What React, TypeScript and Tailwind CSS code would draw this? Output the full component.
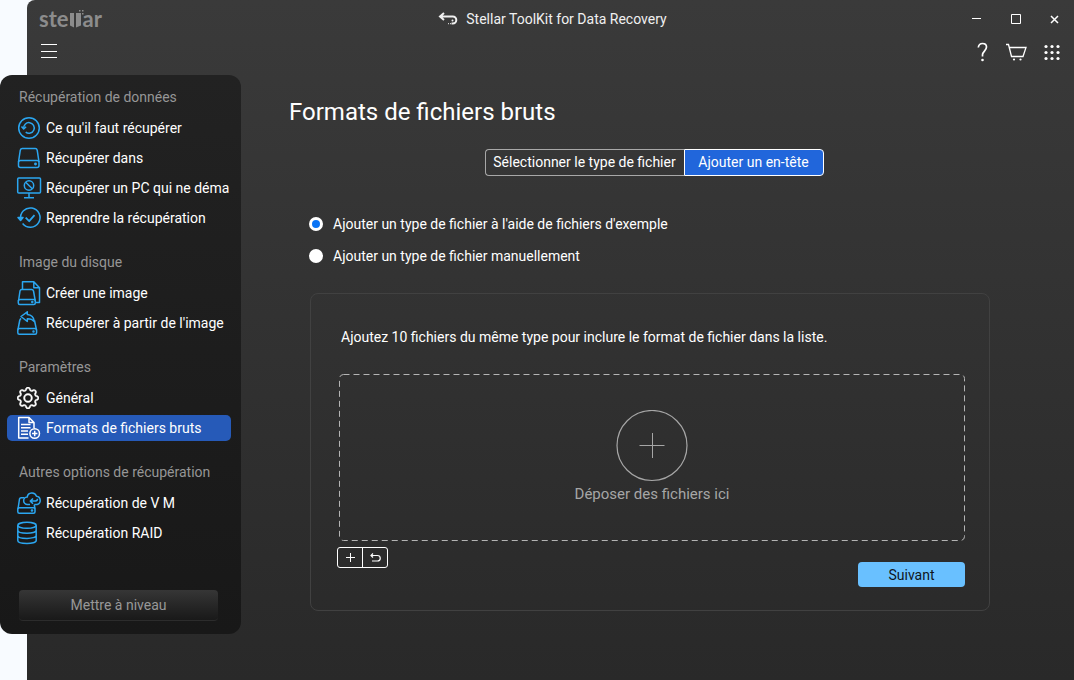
import { useState } from "react";
import type { ReactNode } from "react";
import { BsGear } from "react-icons/bs";

function Icon({ children }: { children: ReactNode }) {
  return (
    <svg viewBox="0 0 24 24" className="size-6 shrink-0 overflow-visible" fill="none" stroke="currentColor" strokeWidth="1.5" strokeLinejoin="round" aria-hidden="true">
      {children}
    </svg>
  );
}

const icons: Record<string, ReactNode> = {
  recover: (
    <Icon>
      <circle cx="12" cy="12" r="10.3" />
      <path d="M6.7 12.6a5.3 5.3 0 1 1 2 3.5" />
      <path d="M4.5 10.6l2.2 2.4 2.4-2.2" />
    </Icon>
  ),
  drive: (
    <Icon>
      <path d="M1.5 16L3.300 4.200Q3.700 2.600 5.300 2.600h13Q19.800 2.600 20.200 4.200L22 16" />
      <rect x="1.5" y="14.5" width="20.5" height="7" rx="2" />
      <circle cx="18.5" cy="18" r=".7" fill="currentColor" />
    </Icon>
  ),
  pc: (
    <Icon>
      <rect x=".7" y="2" width="22.8" height="15" rx="1" />
      <path d="M12 17v4.700M7 21.800h10" />
      <circle cx="12" cy="9.500" r="4.700" />
      <path d="M8.700 6.200l6.600 6.600" />
    </Icon>
  ),
  resume: (
    <Icon>
      <path d="M3.800 13.500a9.700 9.700 0 1 1 1.800 4" />
      <path d="M1 11.500h5L3.600 14.500z" fill="currentColor" />
      <path d="M8.700 11.700l3.500 3.500 5.300-6" strokeWidth="1.800" />
    </Icon>
  ),
  image: (
    <Icon>
      <path d="M5.500 8.500V.8h11.300l5.700 6V21.500H18.500M16.800.8v6h5.700" />
      <path d="M1.500 20L3 10q.4-1.400 1.800-1.400h9.900q1.400 0 1.800 1.400L18.300 20" />
      <rect x="1.300" y="18.500" width="17" height="5" rx="1.500" />
      <circle cx="15.300" cy="21" r=".5" fill="currentColor" />
    </Icon>
  ),
  restore: (
    <Icon>
      <path d="M4 5.500L10.300.8v2.700c4.200.3 6.500 2.300 7 7-2-2.200-4-2.800-7-2.700v2.700z" />
      <path d="M.9 19L2.700 9.500q.3-1.500 1.500-2M17.500 9.500L19.500 19" />
      <rect x=".8" y="17.500" width="18.800" height="5.800" rx="1.500" />
      <circle cx="16.500" cy="20.500" r=".5" fill="currentColor" />
    </Icon>
  ),
  gear: (
    <span className="flex size-6 shrink-0 items-center">
      <BsGear size={22} stroke="currentColor" strokeWidth=".35" aria-hidden="true" />
    </span>
  ),
  formats: (
    <Icon>
      <path d="M11.500 22H1.700V1.500h10.300l5 5v5.500M12 1.500v5h5" />
      <path d="M4 8.500h9.500M4 11.700h9.500M4 15h7M4 18.300h7" />
      <circle cx="17.700" cy="17.500" r="4.800" />
      <path d="M17.700 14.800v5.400M15 17.500h5.400" />
    </Icon>
  ),
  vm: (
    <Icon>
      <path d="M1 18L2.500 8q.3-1.300 1.600-1.300h3.400M17.200 13.500L18 18" />
      <rect x=".8" y="16.700" width="17.200" height="5.600" rx="1.500" />
      <circle cx="15" cy="19.500" r=".6" fill="currentColor" />
      <path d="M13 13.500h-2.500a3.700 3.700 0 0 1-.3-7.400 4.800 4.800 0 0 1 9.300-.8 4.200 4.200 0 0 1 .7 8.200H17.500" />
      <path d="M16 7.500l-2.700 2.600 2.700 2.600M13.500 10.100h5q2-.2 2-2.300" />
    </Icon>
  ),
  raid: (
    <Icon>
      <ellipse cx="10" cy="4.300" rx="9.200" ry="3" />
      <path d="M.8 4.300v15.200c0 4 18.400 4 18.400 0V4.300M.8 9.300c0 4 18.400 4 18.400 0M.8 14.400c0 4 18.400 4 18.400 0" />
    </Icon>
  ),
};

const menu = [
  {
    title: "Récupération de données",
    items: [
      { icon: "recover", label: "Ce qu'il faut récupérer" },
      { icon: "drive", label: "Récupérer dans" },
      { icon: "pc", label: "Récupérer un PC qui ne déma" },
      { icon: "resume", label: "Reprendre la récupération" },
    ],
  },
  {
    title: "Image du disque",
    items: [
      { icon: "image", label: "Créer une image" },
      { icon: "restore", label: "Récupérer à partir de l'image" },
    ],
  },
  {
    title: "Paramètres",
    items: [
      { icon: "gear", label: "Général", white: true },
      { icon: "formats", label: "Formats de fichiers bruts", white: true },
    ],
  },
  {
    title: "Autres options de récupération",
    items: [
      { icon: "vm", label: "Récupération de V M" },
      { icon: "raid", label: "Récupération RAID" },
    ],
  },
];

function Logo() {
  return (
    <div className="flex items-center pl-2 font-['Lato'] text-[22px] leading-6 font-bold text-[#8c8c8c]">
      <span>ste</span>
      <svg width="14" height="24" viewBox="0 0 14 24" className="overflow-visible" fill="currentColor" aria-label="ll">
        <path d="M1 6h4v14.500L1 18.500zM7 6h5V18.500l-5 2z" />
        <path d="M10 3h1.500v1.500H10zM13 3h1.500v1.500H13zM13 6h1.500v1.500H13z" />
      </svg>
      <span>ar</span>
    </div>
  );
}

function Header() {
  return (
    <header className="text-white">
      <div className="grid h-[38px] grid-cols-[1fr_auto_1fr] items-center pl-1">
        <Logo />
        <div className="flex items-center gap-2 text-sm text-[#f0f0f0]">
          <svg width="20" height="14" viewBox="0 0 20 14" fill="none" stroke="currentColor" strokeWidth="2" aria-hidden="true">
            <path d="M6 1L2 4.500 6 8M2.500 4.500h12.300a3.500 3.500 0 0 1 0 7H13.500" />
            <circle cx="14.500" cy="8.500" r="1" fill="currentColor" stroke="none" />
            <path d="M10 11.700h3" strokeWidth="1" strokeDasharray="1 1" />
          </svg>
          <span>Stellar ToolKit for Data Recovery</span>
        </div>
        <div className="flex justify-end">
          <button aria-label="Réduire" className="flex h-[38px] w-[39px] items-center justify-center">
            <svg width="10" height="10" stroke="currentColor"><path d="M0 4.500h9" /></svg>
          </button>
          <button aria-label="Agrandir" className="flex h-[38px] w-[39px] items-center justify-center">
            <svg width="10" height="10" fill="none" stroke="currentColor"><path d="M.5.500h9v9h-9z" /></svg>
          </button>
          <button aria-label="Fermer" className="flex h-[38px] w-[39px] items-center justify-center">
            <svg width="9" height="9" stroke="currentColor" strokeWidth="1.500"><path d="M1 1l7 7M8 1l-7 7" /></svg>
          </button>
        </div>
      </div>
      <div className="flex h-[37px] items-start justify-between pr-[13px] pl-3.5">
        <button aria-label="Menu" className="mt-1.5">
          <svg width="16" height="15" stroke="currentColor"><path d="M0 .5h16M0 7.500h16M0 13.500h16" /></svg>
        </button>
        <div className="mt-1 flex items-center gap-4">
          <button aria-label="Aide">
            <svg width="14" height="22" viewBox="0 0 14 22" fill="none" stroke="currentColor" strokeWidth="1.700">
              <path d="M3.300 5.500C3.700 2.500 5.500 1.500 7.500 1.500c2.300 0 4 1.400 4 3.600 0 3.600-4 4.300-4 7.700v1.700" />
              <circle cx="7.500" cy="18" r="1.300" fill="currentColor" stroke="none" />
            </svg>
          </button>
          <button aria-label="Panier">
            <svg width="22" height="20" viewBox="0 0 22 20" fill="none" stroke="currentColor" strokeWidth="1.300">
              <path d="M1 1.500h2.500L6.500 13.500H18L21 4.500H4.500" />
              <circle cx="9" cy="16.500" r="1.100" fill="currentColor" stroke="none" />
              <circle cx="15.500" cy="16.500" r="1.100" fill="currentColor" stroke="none" />
            </svg>
          </button>
          <button aria-label="Applications">
            <svg width="18" height="18" viewBox="0 0 18 18" fill="currentColor">
              {[2.5, 8.5, 14.5].map((y) => [3, 9, 15].map((x) => <circle key={`${x}-${y}`} cx={x} cy={y} r="1.600" />))}
            </svg>
          </button>
        </div>
      </div>
    </header>
  );
}

function Sidebar({ active, onSelect }: { active: string; onSelect: (label: string) => void }) {
  return (
    <aside className="-ml-[27px] w-[241px] shrink-0 self-start rounded-xl bg-linear-to-b from-[#222222] to-[#181818] pt-3 pr-2.5 pb-[13px] pl-[7px]">
      <nav className="flex flex-col gap-[21px]">
        {menu.map((group) => (
          <div key={group.title}>
            <h2 className="mb-2 pl-3 text-sm text-[#969696]">{group.title}</h2>
            <div className="flex flex-col gap-1">
              {group.items.map((item) => (
                <button
                  key={item.label}
                  onClick={() => onSelect(item.label)}
                  className={`flex h-[26px] items-center gap-[5px] rounded-[5px] pl-2.5 text-left text-sm whitespace-nowrap text-white ${active === item.label ? "bg-[#265ab8]" : ""}`}
                >
                  <span className={"white" in item ? "text-white" : "text-[#2ba6f0]"}>{icons[item.icon]}</span>
                  {item.label}
                </button>
              ))}
            </div>
          </div>
        ))}
      </nav>
      <button className="mt-11 mr-[13px] ml-3 flex h-[31px] w-[199px] items-center justify-center rounded border-b border-[#2c2c2c] bg-linear-to-b from-[#363636] to-[#191919] text-sm text-[#989898]">
        Mettre à niveau
      </button>
    </aside>
  );
}

export default function App() {
  const [active, setActive] = useState("Formats de fichiers bruts");
  const [tab, setTab] = useState("header");
  const [mode, setMode] = useState("sample");

  return (
    <div className="min-h-screen bg-[#f8fbff] pl-[27px] font-['Roboto',sans-serif]">
      <div className="flex min-h-screen flex-col rounded-tl-lg bg-linear-to-b from-[#3a3a3a] to-[#292929]">
        <Header />
        <div className="flex flex-1">
          <Sidebar active={active} onSelect={setActive} />
          <main className="flex-1 pt-[21px] pr-[84px] pl-12 text-sm text-white">
            <h1 className="text-2xl">Formats de fichiers bruts</h1>

            <div className="mt-[21px] ml-[21px] flex justify-center pl-2">
              <button
                onClick={() => setTab("type")}
                className={`h-[27px] w-[199px] rounded-l border border-r-0 border-[#a8a8a8] pb-0.5 ${tab === "type" ? "bg-[#2166db]" : ""}`}
              >
                Sélectionner le type de fichier
              </button>
              <button
                onClick={() => setTab("header")}
                className={`h-[27px] w-[140px] rounded-r border border-white pb-0.5 ${tab === "header" ? "bg-[#2166db]" : ""}`}
              >
                Ajouter un en-tête
              </button>
            </div>

            <div className="mt-[38px] ml-5 flex flex-col gap-3">
              <label className="flex items-center gap-2.5">
                <input type="radio" name="mode" checked={mode === "sample"} onChange={() => setMode("sample")}
                  className="size-3.5 appearance-none rounded-full border-3 border-white bg-white checked:bg-[#0a74f5]" />
                Ajouter un type de fichier à l'aide de fichiers d'exemple
              </label>
              <label className="flex items-center gap-2.5">
                <input type="radio" name="mode" checked={mode === "manual"} onChange={() => setMode("manual")}
                  className="size-3.5 appearance-none rounded-full border-3 border-white bg-white checked:bg-[#0a74f5]" />
                Ajouter un type de fichier manuellement
              </label>
            </div>

            <section className="mt-[27px] ml-[21px] rounded-lg border border-[#414141] pt-[33px] pr-6 pb-[23px] pl-7">
              <p className="pl-0.5">Ajoutez 10 fichiers du même type pour inclure le format de fichier dans la liste.</p>

              <div className="relative mt-[27px] flex h-[167px] flex-col items-center pt-9">
                <svg className="absolute inset-0 size-full" fill="none" stroke="#b4b4b4" strokeDasharray="6 4" aria-hidden="true">
                  <rect x=".5" y=".5" rx="4" className="h-[calc(100%-1px)] w-[calc(100%-1px)]" />
                </svg>
                <svg width="72" height="72" fill="none" stroke="#a6a6a6" aria-hidden="true">
                  <circle cx="36" cy="35.500" r="35" strokeWidth="1.200" />
                  <path d="M23.500 35.500h25M36.500 23v25" />
                </svg>
                <p className="mt-0.5 text-[15px] leading-5 text-[#a6a6a6]">Déposer des fichiers ici</p>
              </div>

              <div className="mt-1.5 flex items-start justify-between">
                <div className="-ml-0.5 flex rounded-[3px] border border-white">
                  <button aria-label="Ajouter" className="flex h-[19px] w-[25px] items-center justify-center border-r border-white">
                    <svg width="9" height="9" stroke="currentColor"><path d="M0 4.500h9M4.500 0v9" /></svg>
                  </button>
                  <button aria-label="Annuler" className="flex h-[19px] w-6 items-center justify-center">
                    <svg width="11" height="9" fill="none" stroke="currentColor" strokeWidth="1.200">
                      <path d="M3 .500L1 2.500l2 2M1 2.500h6.500a2.700 2.700 0 0 1 0 5.500H2" />
                    </svg>
                  </button>
                </div>
                <button className="mt-[15px] h-[25px] w-[107px] rounded bg-[#69c0ff] text-[#10161c]">Suivant</button>
              </div>
            </section>
          </main>
        </div>
      </div>
    </div>
  );
}
